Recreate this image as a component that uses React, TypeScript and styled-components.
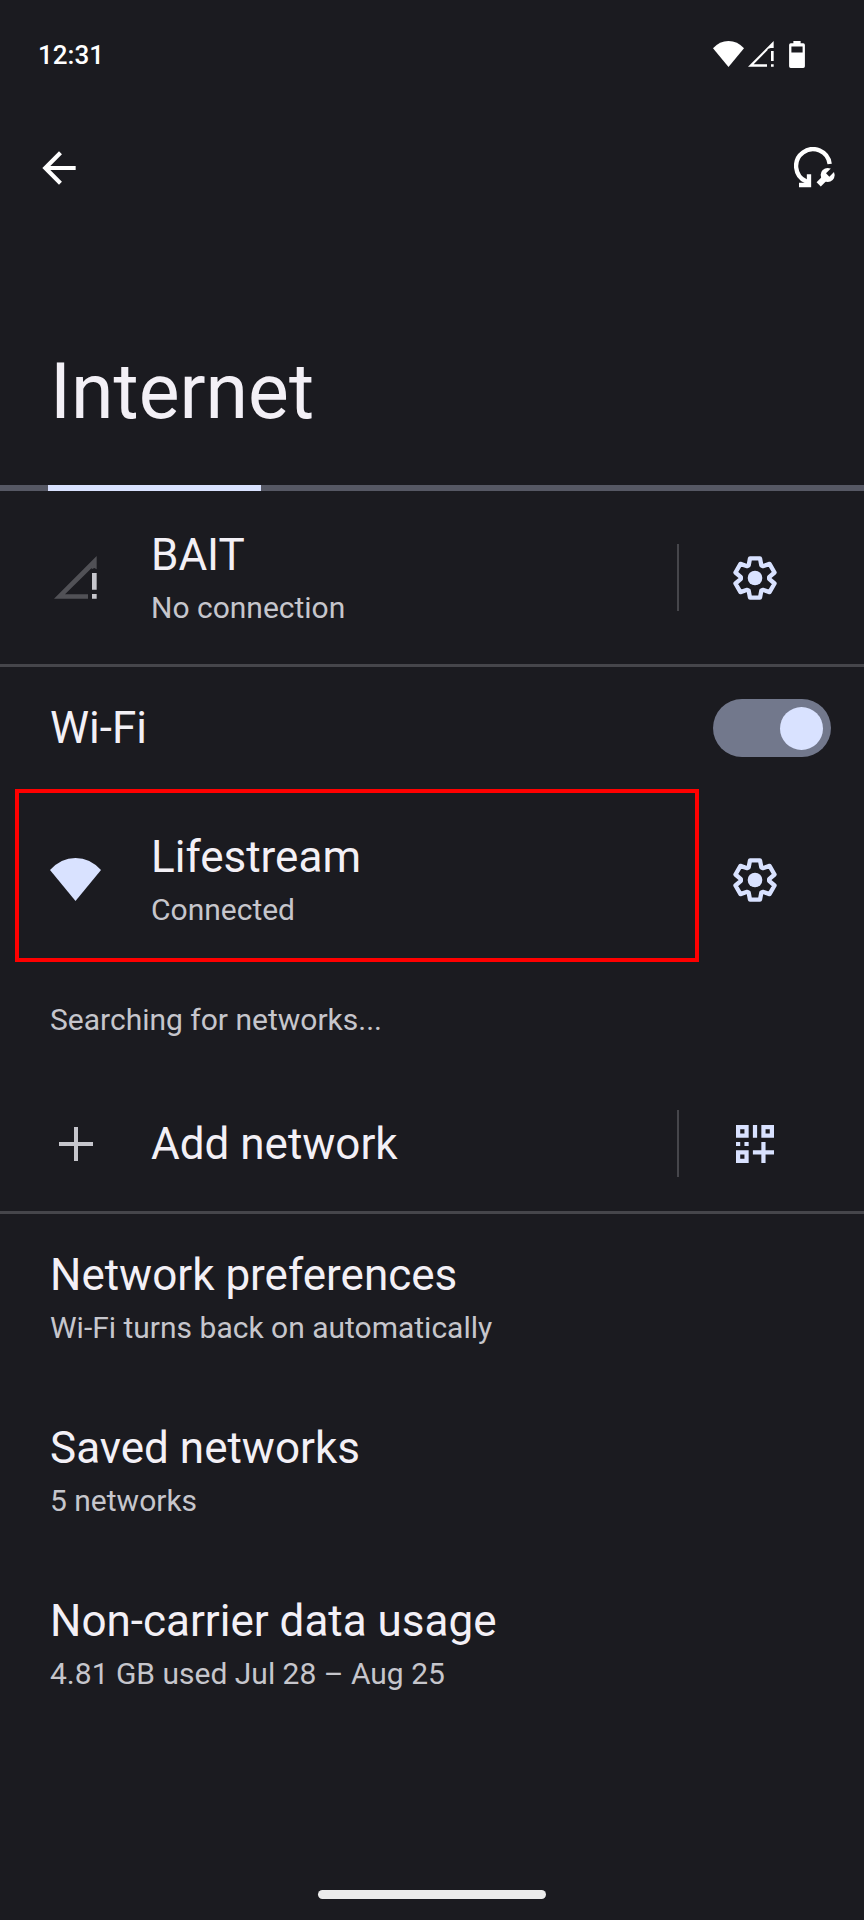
import React from "react";
import styled, { createGlobalStyle } from "styled-components";

const colors = {
  background: "#1b1b20",
  text: "#f3f0f6",
  subtle: "#c6c6cc",
  accent: "#d9e2ff",
  track: "#72788c",
  progress: "#565864",
  divider: "#46464b",
  dim: "#515156",
  highlight: "#ff0000",
};

const GlobalStyle = createGlobalStyle`
  * { box-sizing: border-box; }
  body {
    margin: 0;
    background: ${colors.background};
    color: ${colors.text};
    font-family: Roboto, "Liberation Sans", sans-serif;
  }
  svg { display: block; flex: none; }
`;

const Screen = styled.div`
  display: flex;
  flex-direction: column;
  min-height: 100vh;
`;

const StatusBar = styled.div`
  display: flex;
  align-items: center;
  justify-content: space-between;
  height: 110px;
  padding: 0 59px 0 38px;
  color: #ffffff;
`;

const Clock = styled.time`
  font-size: 26px;
  line-height: 32px;
  font-weight: 500;
`;

const StatusIcons = styled.div`
  display: flex;
  align-items: center;
  gap: 4px;
  padding-bottom: 2px;
`;

const BatterySlot = styled.span`
  margin-left: 11px;
`;

const AppBar = styled.header`
  display: flex;
  align-items: center;
  justify-content: space-between;
  height: 115px;
  padding: 0 19px 0 29px;
`;

const IconButton = styled.button`
  display: grid;
  place-items: center;
  width: 60px;
  height: 60px;
  padding: 0;
  border: 0;
  background: none;
  color: ${colors.accent};
`;

const Title = styled.h1`
  margin: 0;
  padding: 119px 50px 45px;
  font-size: 77px;
  line-height: 96px;
  font-weight: 400;
`;

const Progress = styled.div`
  height: 6px;
  background: ${colors.progress};
`;

const ProgressValue = styled.div`
  width: 213px;
  height: 100%;
  margin-left: 48px;
  background: ${colors.accent};
`;

const Section = styled.section<{ $last?: boolean }>`
  border-bottom: ${(p) => (p.$last ? "0" : `3px solid ${colors.divider}`)};
`;

const Row = styled.div<{ $height: number; $inset?: boolean }>`
  display: flex;
  align-items: center;
  min-height: ${(p) => p.$height}px;
  padding-left: ${(p) => (p.$inset ? "15px" : "0")};
`;

const RowLink = styled.a<{ $outlined?: boolean }>`
  display: flex;
  flex: 1;
  align-items: center;
  align-self: stretch;
  padding: ${(p) => (p.$outlined ? "8px 0 0 31px" : "0 0 0 50px")};
  border: ${(p) => (p.$outlined ? `4px solid ${colors.highlight}` : "0")};
  color: ${colors.text};
  text-decoration: none;
`;

const Leading = styled.span<{ $active?: boolean }>`
  display: flex;
  justify-content: center;
  width: 51px;
  margin-right: 50px;
  color: ${(p) => (p.$active ? colors.accent : colors.subtle)};
`;

const Trailing = styled.div<{ $divided?: boolean }>`
  display: flex;
  align-items: center;
  justify-content: center;
  width: ${(p) => (p.$divided ? "187px" : "165px")};
  height: 67px;
  margin-top: ${(p) => (p.$divided ? "0" : "8px")};
  padding-right: ${(p) => (p.$divided ? "34px" : "54px")};
  border-left: ${(p) => (p.$divided ? `2px solid ${colors.divider}` : "0")};
`;

const Labels = styled.span`
  display: flex;
  flex-direction: column;
  padding-top: 4px;
`;

const Label = styled.span`
  font-size: 44px;
  line-height: 56px;
`;

const Summary = styled.span`
  font-size: 30px;
  line-height: 50px;
  color: ${colors.subtle};
`;

const SwitchRow = styled.label`
  display: flex;
  align-items: center;
  justify-content: space-between;
  height: 122px;
  padding: 0 33px 0 50px;
`;

const Switch = styled.input`
  appearance: none;
  display: flex;
  align-items: center;
  width: 118px;
  height: 58px;
  margin: 0;
  padding: 0 8px;
  border-radius: 29px;
  background: ${colors.track};

  &::before {
    content: "";
    width: 43px;
    height: 43px;
    border-radius: 50%;
    background: ${colors.accent};
  }
  &:checked {
    justify-content: flex-end;
  }
`;

const Status = styled.p`
  display: flex;
  align-items: center;
  height: 114px;
  margin: 0;
  padding: 0 50px;
  font-size: 30px;
  color: ${colors.subtle};
`;

const Preference = styled.a`
  display: flex;
  flex-direction: column;
  padding: 33px 50px 34px;
  color: ${colors.text};
  text-decoration: none;
`;

const NavArea = styled.footer`
  display: flex;
  justify-content: center;
  margin-top: auto;
  padding-bottom: 21px;
`;

const NavHandle = styled.div`
  width: 228px;
  height: 9px;
  border-radius: 5px;
  background: #ececec;
`;

const WifiIcon = ({ width, height }: { width: number; height: number }) => (
  <svg width={width} height={height} viewBox="0 0 152 128" fill="currentColor" preserveAspectRatio="none">
    <path d="M0 36Q32 0 76 0T152 36L76 128Z" />
  </svg>
);

const StatusSignalIcon = () => (
  <svg width="26" height="26" viewBox="0 0 78 78" fill="currentColor">
    <path d="M0 77L77 0V21H68L59 24V27L17 70H57V77ZM69 30H77V60H69ZM69 70H77V77H69Z" />
  </svg>
);

const BatteryIcon = () => (
  <svg width="16" height="27" viewBox="0 0 48 82" fill="currentColor">
    <path
      fillRule="evenodd"
      d="M13 0H35V7H43Q48 7 48 12V77Q48 82 43 82H5Q0 82 0 77V12Q0 7 5 7H13ZM7 17V35H41V17Z"
    />
  </svg>
);

const SignalIcon = () => (
  <svg width="43" height="43" viewBox="0 0 129 129">
    <path fill={colors.dim} d="M0 128L128 0V40L121 36L113 40V36L33 115H102V128Z" />
    <path fill={colors.subtle} d="M114 51H128V101H114ZM114 114H128V128H114Z" />
  </svg>
);

const BackIcon = () => (
  <svg width="50" height="50" viewBox="0 0 24 24" fill="#ffffff">
    <path d="M20 11H7.83l5.59-5.59L12 4l-8 8 8 8 1.41-1.41L7.83 13H20v-2z" />
  </svg>
);

const ResetIcon = () => (
  <svg width="42" height="42" viewBox="0 0 126 126" fill="none" stroke="#ffffff">
    <path d="M107 51A50.500 50.500 0 1 0 36 103L46 112" strokeWidth="13" />
    <path d="M45 82V114H15" strokeWidth="13" />
    <path d="M98 88L74 112" strokeWidth="18" />
    <circle cx="101" cy="84" r="21" fill="#ffffff" stroke="none" />
    <path d="M101 84L124 61" stroke={colors.background} strokeWidth="14" />
  </svg>
);

const toothPoints = [
  [-19, -38],
  [-15, -59],
  [15, -59],
  [19, -38],
];
const gearOutline = Array.from({ length: 6 }, (_, i) => {
  const a = (i * Math.PI) / 3;
  return toothPoints
    .map(([x, y]) => `${x * Math.cos(a) - y * Math.sin(a)},${x * Math.sin(a) + y * Math.cos(a)}`)
    .join(" ");
}).join(" ");

const GearIcon = () => (
  <svg width="44" height="44" viewBox="-66 -66 132 132">
    <polygon points={gearOutline} fill="none" stroke="currentColor" strokeWidth="13" strokeLinejoin="round" />
    <circle r="22" fill="currentColor" />
  </svg>
);

const PlusIcon = () => (
  <svg width="34" height="34" viewBox="0 0 34 34" fill="currentColor">
    <path d="M15 0H19V15H34V19H19V34H15V19H0V15H15Z" />
  </svg>
);

const QrAddIcon = () => (
  <svg width="38" height="38" viewBox="0 0 9 9" fill="currentColor">
    <path
      fillRule="evenodd"
      d="M0 0H3V3H0ZM1 1V2H2V1ZM6 0H9V3H6ZM7 1V2H8V1ZM0 6H3V9H0ZM1 7V8H2V7ZM4 0H5V3H4ZM0 4H1V5H0ZM2 4H3V5H2ZM6 4H7V6H9V7H7V9H6V7H4V6H6Z"
    />
  </svg>
);

const preferences = [
  { id: "preferences", label: "Network preferences", summary: "Wi-Fi turns back on automatically" },
  { id: "saved", label: "Saved networks", summary: "5 networks" },
  { id: "usage", label: "Non-carrier data usage", summary: "4.81 GB used Jul 28 – Aug 25" },
];

export default function App() {
  return (
    <Screen>
      <GlobalStyle />
      <StatusBar>
        <Clock>12:31</Clock>
        <StatusIcons>
          <WifiIcon width={31} height={26} />
          <StatusSignalIcon />
          <BatterySlot>
            <BatteryIcon />
          </BatterySlot>
        </StatusIcons>
      </StatusBar>
      <AppBar>
        <IconButton aria-label="Back">
          <BackIcon />
        </IconButton>
        <IconButton aria-label="Reset internet">
          <ResetIcon />
        </IconButton>
      </AppBar>
      <main>
        <Title>Internet</Title>
        <Progress role="progressbar" aria-label="Searching for networks">
          <ProgressValue />
        </Progress>
        <Section>
          <Row $height={173}>
            <RowLink href="#carrier">
              <Leading>
                <SignalIcon />
              </Leading>
              <Labels>
                <Label>BAIT</Label>
                <Summary>No connection</Summary>
              </Labels>
            </RowLink>
            <Trailing $divided>
              <IconButton aria-label="BAIT settings">
                <GearIcon />
              </IconButton>
            </Trailing>
          </Row>
        </Section>
        <Section>
          <SwitchRow>
            <Label>Wi-Fi</Label>
            <Switch type="checkbox" role="switch" defaultChecked />
          </SwitchRow>
          <Row $height={173} $inset>
            <RowLink href="#lifestream" $outlined>
              <Leading $active>
                <WifiIcon width={51} height={43} />
              </Leading>
              <Labels>
                <Label>Lifestream</Label>
                <Summary>Connected</Summary>
              </Labels>
            </RowLink>
            <Trailing>
              <IconButton aria-label="Lifestream settings">
                <GearIcon />
              </IconButton>
            </Trailing>
          </Row>
          <Status>Searching for networks...</Status>
          <Row $height={135}>
            <RowLink href="#add">
              <Leading>
                <PlusIcon />
              </Leading>
              <Label>Add network</Label>
            </RowLink>
            <Trailing $divided>
              <IconButton aria-label="Scan QR code">
                <QrAddIcon />
              </IconButton>
            </Trailing>
          </Row>
        </Section>
        <Section $last>
          {preferences.map((item) => (
            <Preference key={item.id} href={`#${item.id}`}>
              <Label>{item.label}</Label>
              <Summary>{item.summary}</Summary>
            </Preference>
          ))}
        </Section>
      </main>
      <NavArea>
        <NavHandle />
      </NavArea>
    </Screen>
  );
}
